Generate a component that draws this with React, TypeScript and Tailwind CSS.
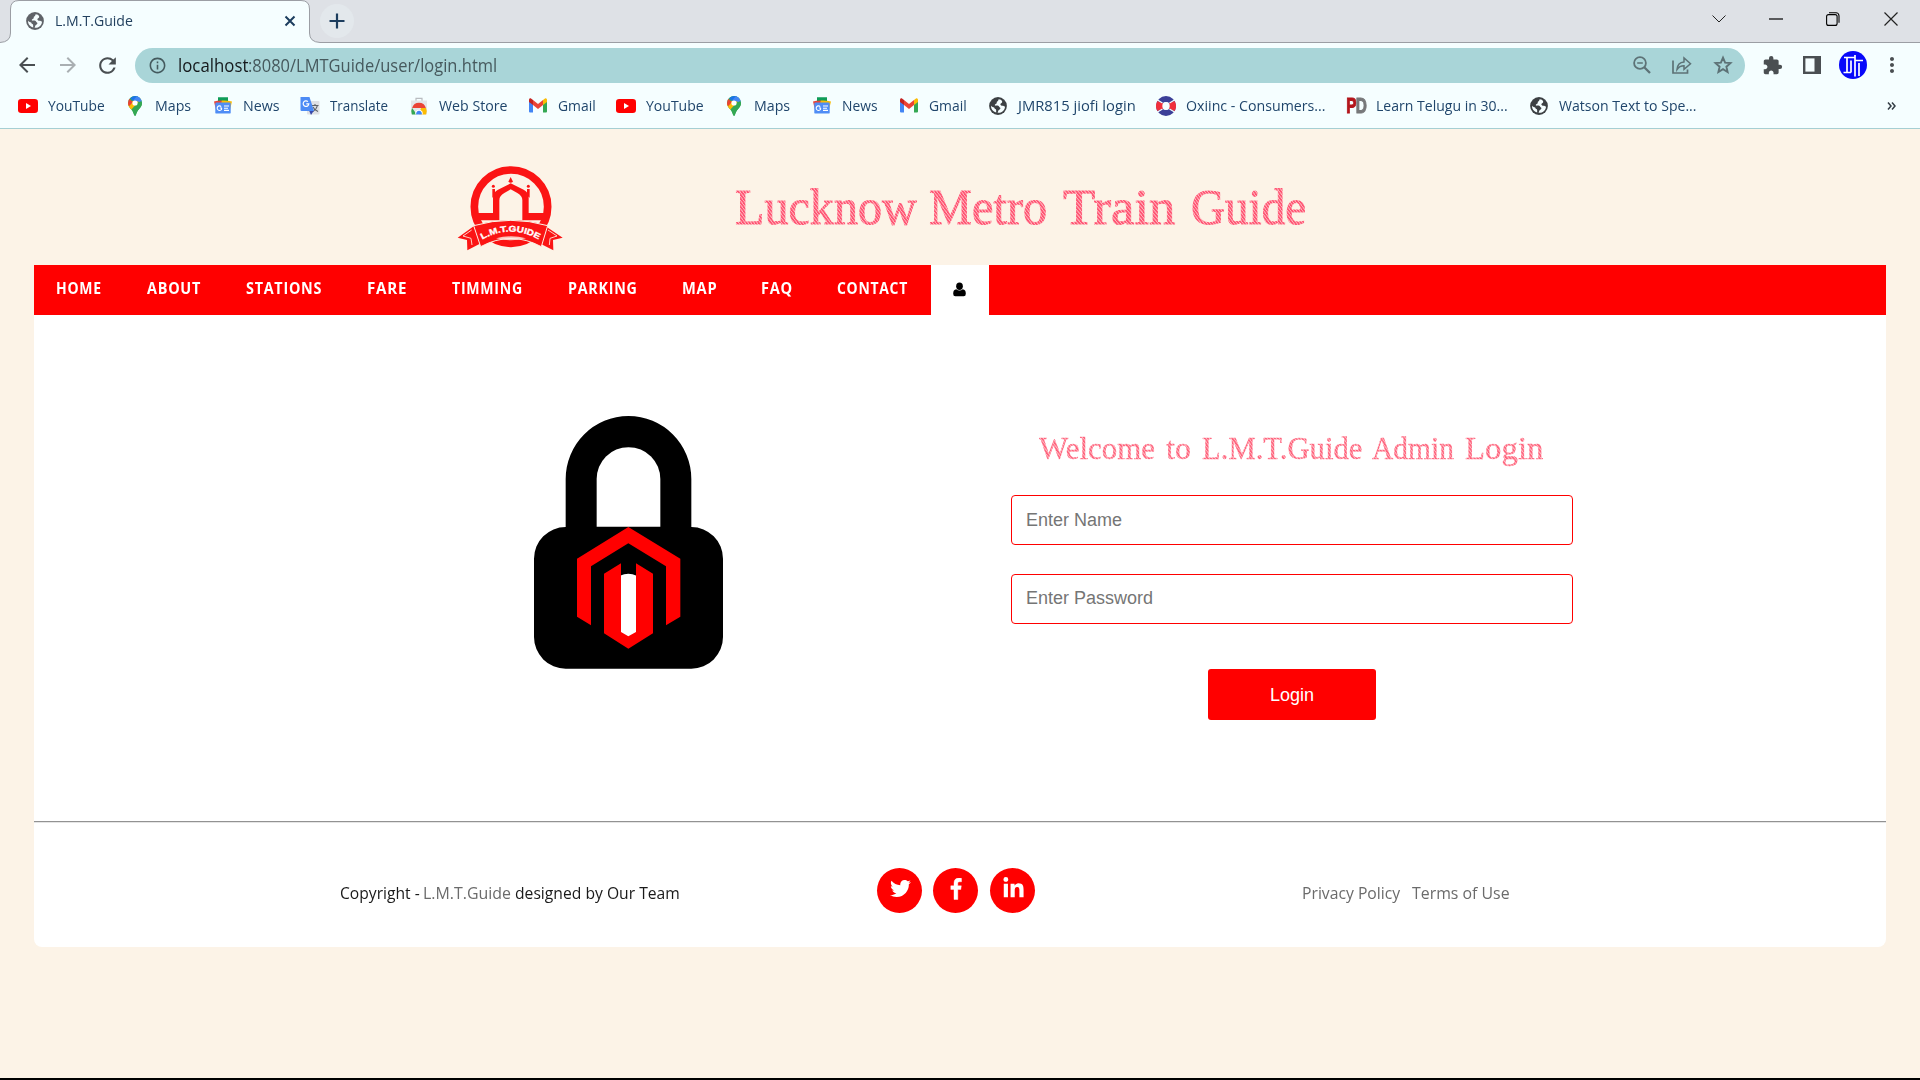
import React, { useLayoutEffect, useRef, useState } from "react";
import { MdArrowBack, MdArrowForward, MdRefresh, MdInfoOutline, MdExtension, MdMoreVert } from "react-icons/md";
import { FaTwitter, FaLinkedinIn } from "react-icons/fa";

/* Single-line text stretched horizontally to an exact width. */
function Fit({ w, className = "", children }: { w: number; className?: string; children: React.ReactNode }) {
  const ref = useRef<HTMLSpanElement>(null);
  const [scale, setScale] = useState(1);
  useLayoutEffect(() => {
    if (ref.current) setScale(w / ref.current.offsetWidth);
  }, [w]);
  return (
    <span className="block shrink-0 whitespace-nowrap" style={{ width: w }}>
      <span ref={ref} className={`inline-block origin-left ${className}`} style={{ transform: `scaleX(${scale})` }}>
        {children}
      </span>
    </span>
  );
}

function Globe({ color = "#3c4043" }: { color?: string }) {
  return (
    <svg viewBox="0 0 18 18" className="size-[18px]">
      <circle cx="9" cy="9" r="8.9" fill={color} />
      <path d="M9.8 2.2 C9 3 9.6 3.6 8.6 4.2 C7.4 4.8 7.4 5.4 8 6 L6 7.4 C5.4 8 6 8.8 7 8.6 C8.4 8.4 9.6 8.6 10 9.6 C10.3 10.6 11.6 10.4 11.4 11.6 C11 13 9.4 12.6 9.2 14 L8.6 15.8 C12.8 16.2 16 13 16 9.4 C15 9.8 14.6 8.8 13.6 8.8 C12.2 8.8 11.2 8.2 11.4 7 C11.8 5.8 13.4 6 13.2 4.4 C12.6 3 11.4 2.2 9.8 2.2Z" fill="#f5feff" />
      <path d="M2 8.6 C2.2 9.6 3.4 10 4.4 10.2 C5.8 10.4 5.2 11.6 6.4 12 C7.6 12.4 7 13.8 7.2 15.6 C4 14.8 1.8 12 2 8.6Z" fill="#f5feff" />
    </svg>
  );
}

const YouTube = () => (
  <svg viewBox="0 0 20 14" className="h-[14px] w-5">
    <rect width="20" height="14" rx="3.2" fill="#f00" />
    <path d="M8 4v6l5-3z" fill="#fff" />
  </svg>
);

const Maps = () => (
  <svg viewBox="0 0 14 20" className="h-5 w-[14px]">
    <clipPath id="pin"><path d="M7 0a7 7 0 0 1 7 7c0 4.200-3.600 5.800-5.200 9.600C8.200 18 7.900 20 7 20s-1.200-2-1.800-3.400C3.600 12.800 0 11.200 0 7a7 7 0 0 1 7-7z" /></clipPath>
    <g clipPath="url(#pin)">
      <rect width="14" height="20" fill="#34a853" />
      <path d="M14 2L2 15-1 9l5.500-4z" fill="#fbbc04" />
      <path d="M14 4.500L4 16.500 7 20h7z" fill="#34a853" />
      <path d="M-1 1L4.800 6 1.200 10.200-1 8z" fill="#ea4335" />
      <path d="M2.200 2.200L5 5l6-5H5z" fill="#1a73e8" />
      <path d="M14 5.400L8.500 5 11 0h3z" fill="#4285f4" />
      <path d="M5 4.500L9 0h3v6z" fill="#4285f4" />
    </g>
    <circle cx="7" cy="7" r="2.600" fill="#fff" />
  </svg>
);

const News = () => (
  <svg viewBox="0 0 18 17" className="h-[17px] w-[18px]">
    <path d="M4 .5h10v6H4z" fill="#0f9d58" />
    <path d="M0 4.500l9-2 3 9L2 13z" fill="#ea4335" />
    <path d="M8 2.500l10 2-2 8H6z" fill="#fbbc04" />
    <path d="M4 .5h10v3H4z" fill="#0f9d58" />
    <rect x="1.300" y="5.600" width="15.400" height="11" rx="1.200" fill="#4f8df5" />
    <path d="M8 11H5.900M7.800 11.400A2.300 2.300 0 1 1 7.200 9.600M10 9h5M10 11.200h4M10 13.400h5" stroke="#fff" strokeWidth="1.100" fill="none" />
  </svg>
);

const Translate = () => (
  <svg viewBox="0 0 20 20" className="size-5">
    <rect x="7" y="5" width="12.500" height="13.500" rx="1" fill="#dfe1e5" />
    <path d="M11.500 9.500h7M15 8v1.500M17.400 9.500c-.6 3-2.600 4.800-4.600 6M13 11c1 2.200 3 3.800 5 4.500" stroke="#5f6368" strokeWidth="1.100" fill="none" />
    <path d="M9 14.500h5L11 19z" fill="#3949ab" />
    <path d="M1 1h8.500l4.500 14H1.500A1 1 0 0 1 .5 14V1.500z" fill="#4c8bf5" />
    <path d="M6.300 7.800h2.500a2.800 2.800 0 1 1-.9-2.200" stroke="#fff" strokeWidth="1.200" fill="none" />
  </svg>
);

const WebStore = () => (
  <svg viewBox="0 0 18 18" className="size-[18px]">
    <path d="M6 4V1.300h6V4" stroke="#b9bcc0" strokeWidth="1.200" fill="none" />
    <path d="M1 3.500h16v13a1 1 0 0 1-1 1H2a1 1 0 0 1-1-1z" fill="#e3e5e8" />
    <path d="M2.100 11a7.200 7.200 0 0 1 13.800 0z" fill="#ea4335" />
    <path d="M2.100 11l4.700 6.500H1.900a7.500 7.500 0 0 1 .2-6.500z" fill="#34a853" />
    <path d="M11 11h5a7.500 7.500 0 0 1 .1 6.500H9z" fill="#fbbc04" />
    <path d="M5.300 17.500a3.800 3.800 0 1 1 7.400 0z" fill="#fff" />
    <path d="M6.200 17.500a2.900 2.900 0 1 1 5.600 0z" fill="#4285f4" />
  </svg>
);

const Gmail = () => (
  <svg viewBox="0 0 20 15" className="h-[15px] w-5">
    <path d="M1 2v11.500a1 1 0 0 0 1 1h3V6z" fill="#4285f4" />
    <path d="M19 2v11.500a1 1 0 0 1-1 1h-3V6z" fill="#34a853" />
    <path d="M15 2l2-1.500c1-.6 2 .3 2 1.500v2l-4 3z" fill="#fbbc04" />
    <path d="M5 2L3 .5C2 0 1 .8 1 2v2l4 3z" fill="#c5221f" />
    <path d="M5 2l5 4 5-4v5l-5 4-5-4z" fill="#ea4335" />
  </svg>
);

const Oxiinc = () => (
  <svg viewBox="0 0 20 20" className="size-5">
    <circle cx="10" cy="10" r="7" fill="none" stroke="#3b3f98" strokeWidth="6" />
    <path d="M1.500 5l6 2.500v5L1.500 15a9.500 9.500 0 0 1 0-10zM18.500 5l-6 2.500v5l6 2.500a9.500 9.500 0 0 0 0-10z" fill="#f0303c" />
    <path d="M1.500 4l5 3M18.500 4l-5 3M1.500 16l5-3M18.500 16l-5-3" stroke="#f5feff" strokeWidth="1.200" />
    <circle cx="10" cy="10" r="3.700" fill="#f5feff" />
  </svg>
);

const PD = () => (
  <span className="inline-flex origin-center scale-x-[0.7] font-['Liberation_Sans'] text-[22px] leading-5 font-bold tracking-[-1px]">
    <span className="text-[#b3151b] [-webkit-text-stroke:1px_#b3151b]">P</span>
    <span className="text-[#77787a] [-webkit-text-stroke:1px_#77787a]">D</span>
  </span>
);

const bookmarks = [
  { icon: <YouTube />, label: "YouTube", text: 57, item: 107 },
  { icon: <Maps />, label: "Maps", text: 36, item: 88 },
  { icon: <News />, label: "News", text: 37, item: 87 },
  { icon: <Translate />, label: "Translate", text: 58, item: 109 },
  { icon: <WebStore />, label: "Web Store", text: 69, item: 119 },
  { icon: <Gmail />, label: "Gmail", text: 38, item: 88 },
  { icon: <YouTube />, label: "YouTube", text: 58, item: 108 },
  { icon: <Maps />, label: "Maps", text: 36, item: 88 },
  { icon: <News />, label: "News", text: 36, item: 87 },
  { icon: <Gmail />, label: "Gmail", text: 38, item: 89 },
  { icon: <Globe />, label: "JMR815 jiofi login", text: 118, item: 168 },
  { icon: <Oxiinc />, label: "Oxiinc - Consumers...", text: 140, item: 190 },
  { icon: <PD />, label: "Learn Telugu in 30...", text: 132, item: 183 },
  { icon: <Globe />, label: "Watson Text to Spe...", text: 138, item: 170 },
];

const navItems = [
  { label: "HOME", text: 46, item: 91 },
  { label: "ABOUT", text: 54, item: 99 },
  { label: "STATIONS", text: 76, item: 121 },
  { label: "FARE", text: 40, item: 85 },
  { label: "TIMMING", text: 71, item: 116 },
  { label: "PARKING", text: 70, item: 114 },
  { label: "MAP", text: 35, item: 79 },
  { label: "FAQ", text: 32, item: 76 },
  { label: "CONTACT", text: 71, item: 94 },
];

function TabStrip() {
  return (
    <div className="flex h-[43px] bg-[#dee1e6]">
      <svg viewBox="0 0 320 43" className="h-[43px] w-[320px] shrink-0">
        <path d="M0 42.500 Q10.500 42 10.500 33V9Q10.500 .5 19 .5H301Q309.500 .5 309.500 9V33Q309.500 42 320 42.500V43H0z" fill="#f5feff" />
        <path d="M0 42.500 Q10.500 42 10.500 33V9Q10.500 .5 19 .5H301Q309.500 .5 309.500 9V33Q309.500 42 320 42.500" fill="none" stroke="#9b9ea4" />
      </svg>
      <div className="-ml-[294px] flex h-[42px] w-[294px] items-center">
        <Globe color="#5f6368" />
        <div className="mb-0.5 ml-[11px] text-[15px] text-[#23415f]"><Fit w={78}>L.M.T.Guide</Fit></div>
        <svg viewBox="0 0 12 12" className="ml-[151px] size-3"><path d="M1.500 1.500l9 9M10.500 1.500l-9 9" stroke="#1c3d5e" strokeWidth="2" /></svg>
      </div>
      <div className="flex flex-1 items-center border-b border-[#9b9ea4]">
        <div className="flex size-[34px] items-center justify-center rounded-full bg-[#e3e8ec]">
          <svg viewBox="0 0 16 16" className="size-4"><path d="M8 .5v15M.5 8h15" stroke="#1c3d5e" strokeWidth="2.200" /></svg>
        </div>
        <div className="mr-[22px] mb-[5px] ml-auto flex items-center">
          <svg viewBox="0 0 14 8" className="mr-[43px] h-2 w-[14px]"><path d="M.5 .5l6.500 6.500 6.500-6.500" fill="none" stroke="#222" /></svg>
          <svg viewBox="0 0 14 2" className="mr-[43px] h-0.5 w-[14px]"><path d="M0 1h14" stroke="#000" strokeWidth="1.200" /></svg>
          <svg viewBox="0 0 14 14" className="mr-[44px] size-[14px]"><rect x=".6" y="2.600" width="10.500" height="10.800" rx="2" fill="none" stroke="#000" strokeWidth="1.100" /><path d="M3 .8h7a3 3 0 0 1 3 3v7" fill="none" stroke="#000" strokeWidth="1.100" /></svg>
          <svg viewBox="0 0 14 14" className="size-[14px]"><path d="M.5 .5l13 13M13.500 .5l-13 13" stroke="#222" strokeWidth="1.200" /></svg>
        </div>
      </div>
    </div>
  );
}

function Toolbar() {
  return (
    <div className="flex h-[44px] items-center pl-[15px] text-[#4a4f52]">
      <MdArrowBack className="size-6" />
      <MdArrowForward className="ml-[17px] size-6 text-[#a9afb2]" />
      <MdRefresh className="ml-[15px] size-[25px]" />
      <div className="ml-[15px] flex h-[35px] w-[1610px] items-center rounded-full bg-[#a9d5d8] pl-[13px]">
        <MdInfoOutline className="size-[19px] text-[#445a5e]" />
        <div className="ml-[11px] flex text-[18px]">
          <Fit w={70} className="text-[#15191c]">localhost</Fit>
          <Fit w={249} className="text-[#46595d]">:8080/LMTGuide/user/login.html</Fit>
        </div>
        <div className="mr-3 ml-auto flex items-center gap-[21px] text-[#5d7276]">
          <svg viewBox="0 0 18 18" className="size-[18px]"><circle cx="7" cy="7" r="5.900" fill="none" stroke="currentColor" strokeWidth="1.800" /><path d="M11 11l6 6" stroke="currentColor" strokeWidth="2.300" /><path d="M4.200 7h5.600" stroke="currentColor" strokeWidth="1.500" /></svg>
          <svg viewBox="0 0 20 18" className="h-[18px] w-5"><path d="M1 4.500V17h14.500v-3.500" fill="none" stroke="currentColor" strokeWidth="1.700" /><path d="M5 13.500c.4-5 3-7.400 7-7.600V2l6.500 5.700-6.500 5.700v-3.600c-3.200 0-5.200 1-7 3.700z" fill="none" stroke="currentColor" strokeWidth="1.500" /></svg>
          <svg viewBox="0 0 20 20" className="size-5"><path d="M10 2.600l2.100 5 5.400.5-4.100 3.600 1.200 5.300-4.600-2.800-4.600 2.800 1.200-5.300-4.100-3.600 5.400-.5z" fill="none" stroke="currentColor" strokeWidth="1.900" /></svg>
        </div>
      </div>
      <MdExtension className="ml-[17px] size-[21px]" />
      <svg viewBox="0 0 18 18" className="ml-5 size-[18px]"><rect x="1.200" y="1.200" width="15.600" height="15.600" fill="none" stroke="currentColor" strokeWidth="2.400" /><path d="M11.500 1h6v16h-6z" fill="currentColor" /></svg>
      <svg viewBox="0 0 28 28" className="ml-[18px] size-7">
        <circle cx="14" cy="14" r="14" fill="#0808fa" />
        <path d="M5 6.500H16M8 6.500V21.500M4.500 21.500H12M12 9.500V21.500M16 4V25.500M16 9.500H24M20 12V25" fill="none" stroke="#fff" strokeWidth="1.700" />
      </svg>
      <MdMoreVert className="ml-[13px] size-6" />
    </div>
  );
}

function Bookmarks() {
  return (
    <div className="flex h-[42px] items-center border-b border-[#a5cfd3] pb-1 pl-[18px] text-[15px] text-[#1f456b]">
      {bookmarks.map((b, i) => (
        <div key={i} className="flex shrink-0 items-center" style={{ width: b.item }}>
          <span className="mr-[10px] flex w-5 justify-center">{b.icon}</span>
          <Fit w={b.text}>{b.label}</Fit>
        </div>
      ))}
      <svg viewBox="0 0 9 8" className="mr-6 ml-auto h-2 w-[9px] shrink-0"><path d="M1 .5L4 4 1 7.500M5 .5L8 4 5 7.500" fill="none" stroke="#333c44" strokeWidth="1.500" /></svg>
    </div>
  );
}

function Logo() {
  return (
    <svg viewBox="0 0 420 330" className="h-[110px] w-[140px]">
      <circle cx="213" cy="155" r="110" fill="none" stroke="#fb1414" strokeWidth="23" />
      <path d="M108 174H159V128Q159 112 174 104L212 85 251 104Q266 112 266 128V174H318V196H247V136Q247 122 232 114L212 103 193 114Q178 122 178 136V196H108z" fill="#fb1414" />
      <path d="M157 128V102h8v20zM261 122v-20h8v26z" fill="#fb1414" />
      <circle cx="160" cy="94" r="4.500" fill="#fb1414" />
      <circle cx="265" cy="94" r="4.500" fill="#fb1414" />
      <path d="M212 66l7 14q-7 6-14 0z" fill="#fb1414" />
      <path d="M148 250Q213 226 278 250Q256 272 213 274 170 272 148 250z" fill="#fb1414" />
      <path d="M101 214L53 248 81 255 82 286 124 264zM317 214L368 248 339 255 340 286 297 264z" fill="#fb1414" />
      <path d="M95 225L69 243 93 250 96 270M324 225L351 243 330 250 328 270" fill="none" stroke="#fcf3e7" strokeWidth="2.500" />
      <path d="M101 212L122 275Q213 226 304 275L323 212Q213 180 101 212z" fill="#fb1414" stroke="#fcf3e7" strokeWidth="3" />
      <path d="M168 250Q213 238 258 250 213 262 168 250z" fill="#fcf3e7" opacity=".8" />
      <path id="ribbon" d="M127 254Q213 204 300 256" fill="none" />
      <text fill="#fff" stroke="#fff" strokeWidth="1" className="font-['Liberation_Sans'] text-[25px] font-bold">
        <textPath href="#ribbon" textLength="178" lengthAdjust="spacingAndGlyphs">L.M.T.GUIDE</textPath>
      </text>
    </svg>
  );
}

function Lock() {
  return (
    <svg viewBox="0 0 780 840" className="h-[280px] w-[260px] shrink-0">
      <path d="M197 381V237a188.500 189 0 0 1 377 0V381A95 95 0 0 1 669 476V711A95 95 0 0 1 574 806H197A95 95 0 0 1 102 711V476A95 95 0 0 1 197 381z" fill="#000" />
      <path d="M290 380V237a95.500 95.500 0 0 1 191 0V380z" fill="#fff" />
      <path d="M360 527Q385 515 410 527V700L385 712 360 700z" fill="#fff" />
      <path d="M385 381L541 476V650L498 676V499L385 430 273 499V676L231 650V476z" fill="#f00" />
      <path d="M312 521L363 490V696L385 709 408 696V490L459 521V700L385 746 312 700z" fill="#f00" />
    </svg>
  );
}

const title =
  "bg-[repeating-linear-gradient(52deg,#ff4f70_0px,#ff5c7a_1.2px,#ffb9be_1.8px,#ff8093_2.5px)] bg-clip-text text-transparent font-['Liberation_Serif'] [-webkit-text-stroke:0.9px_transparent]";
const subtitle =
  "bg-[repeating-linear-gradient(52deg,#ff5c7a_0px,#ff6e86_1.2px,#ffb9be_1.8px,#ff8a9b_2.5px)] bg-clip-text text-transparent font-['Liberation_Serif'] [-webkit-text-stroke:0.4px_transparent]";

export default function App() {
  return (
    <div className="flex h-[1080px] w-[1920px] flex-col overflow-hidden border-b-2 border-black bg-[#fcf3e7] font-['Open_Sans',sans-serif]">
      <div className="bg-[#f5feff]">
        <TabStrip />
        <Toolbar />
        <Bookmarks />
      </div>

      <header className="flex h-[136px] pt-[26px] pl-[440px]">
        <Logo />
        <h1 className="mt-4 ml-[155px] flex text-[50px] leading-[68px]">
          <Fit w={182} className={title}>Lucknow</Fit>
          <span className="ml-3"><Fit w={118} className={title}>Metro</Fit></span>
          <span className="ml-4"><Fit w={113} className={title}>Train</Fit></span>
          <span className="ml-[15px]"><Fit w={115} className={title}>Guide</Fit></span>
        </h1>
      </header>

      <div className="mx-[34px] overflow-hidden rounded-b-lg bg-white">
        <nav className="flex h-[50px] bg-[#f00] pl-[22px] text-[15.500px] font-bold text-white">
          {navItems.map((n) => (
            <a key={n.label} className="flex items-center pb-0.5" style={{ width: n.item }}>
              <Fit w={n.text} className="tracking-[0.8px]">{n.label}</Fit>
            </a>
          ))}
          <a className="flex w-[58px] items-center justify-center bg-white pr-px pb-px">
            <svg viewBox="0 0 14 15" className="h-[15px] w-[13px]"><ellipse cx="7" cy="4" rx="3.600" ry="4" /><path d="M3.500 7.200Q7 10 10.500 7.200 13.800 7.500 13.800 12 13.800 14.800 11.500 14.800H2.500Q.2 14.800 .2 12 .2 7.500 3.500 7.200z" /></svg>
          </a>
        </nav>

        <main className="flex h-[506px] pl-[466px]">
          <div className="pt-[85px]"><Lock /></div>
          <form className="ml-[251px] flex w-[562px] flex-col items-center pt-[110px] font-['Liberation_Sans']">
            <h2 className="flex h-[70px] w-[506px] text-[32px] leading-[47px]">
              <Fit w={116} className={subtitle}>Welcome</Fit>
              <span className="ml-[11px]"><Fit w={25} className={subtitle}>to</Fit></span>
              <span className="ml-[11px]"><Fit w={160} className={subtitle}>L.M.T.Guide</Fit></span>
              <span className="ml-[10px]"><Fit w={82} className={subtitle}>Admin</Fit></span>
              <span className="ml-[11px]"><Fit w={78} className={subtitle}>Login</Fit></span>
            </h2>
            <input placeholder="Enter Name" className="h-[50px] w-full rounded border border-[#f00] px-[14px] pt-px text-[18px] placeholder:text-[#757575]" />
            <input placeholder="Enter Password" className="mt-[29px] h-[50px] w-full rounded border border-[#f00] px-[14px] pb-px text-[18px] placeholder:text-[#757575]" />
            <button type="button" className="mt-[45px] h-[51px] w-[168px] rounded-[3px] bg-[#f00] pt-0.5 text-[18px] text-white">Login</button>
          </form>
        </main>

        <footer className="flex h-[126px] border-t border-[#929292] pt-[46px] pl-[306px] text-[17px] leading-[50px] text-[#6b6b6b] shadow-[inset_0_1px_0_#e5e5e5]">
          <div className="flex text-[#1a1a1a]">
            <Fit w={80}>Copyright -</Fit>
            <span className="ml-[3px] text-[#6b6b6b]"><Fit w={88}>L.M.T.Guide</Fit></span>
            <span className="ml-1"><Fit w={165}>designed by Our Team</Fit></span>
          </div>
          <div className="ml-[197px] flex text-white">
            <span className="flex size-[45px] items-center justify-center rounded-full bg-[#f00] pb-1"><FaTwitter className="ml-0.5 size-[21px]" /></span>
            <span className="ml-[11px] flex size-[45px] items-center justify-center rounded-full bg-[#f00] pb-1">
              <svg viewBox="0 0 12 22" className="h-[22px] w-3"><path d="M11.500 .3V3.800H9.600C8.100 3.800 7.800 4.500 7.800 5.500V7.800H11.300L10.800 11.500H7.800V21.500H4V11.500H.8V7.800H4V5C4 1.900 5.900 .1 8.800 .1 10.100 .1 11.200 .2 11.500 .3z" fill="#fff" stroke="#fff" strokeWidth=".4" /></svg>
            </span>
            <span className="ml-3 flex size-[45px] items-center justify-center rounded-full bg-[#f00] pb-1"><FaLinkedinIn className="ml-0.5 size-[23px]" /></span>
          </div>
          <div className="ml-[267px] flex gap-3">
            <Fit w={98}>Privacy Policy</Fit>
            <Fit w={98}>Terms of Use</Fit>
          </div>
        </footer>
      </div>
    </div>
  );
}
